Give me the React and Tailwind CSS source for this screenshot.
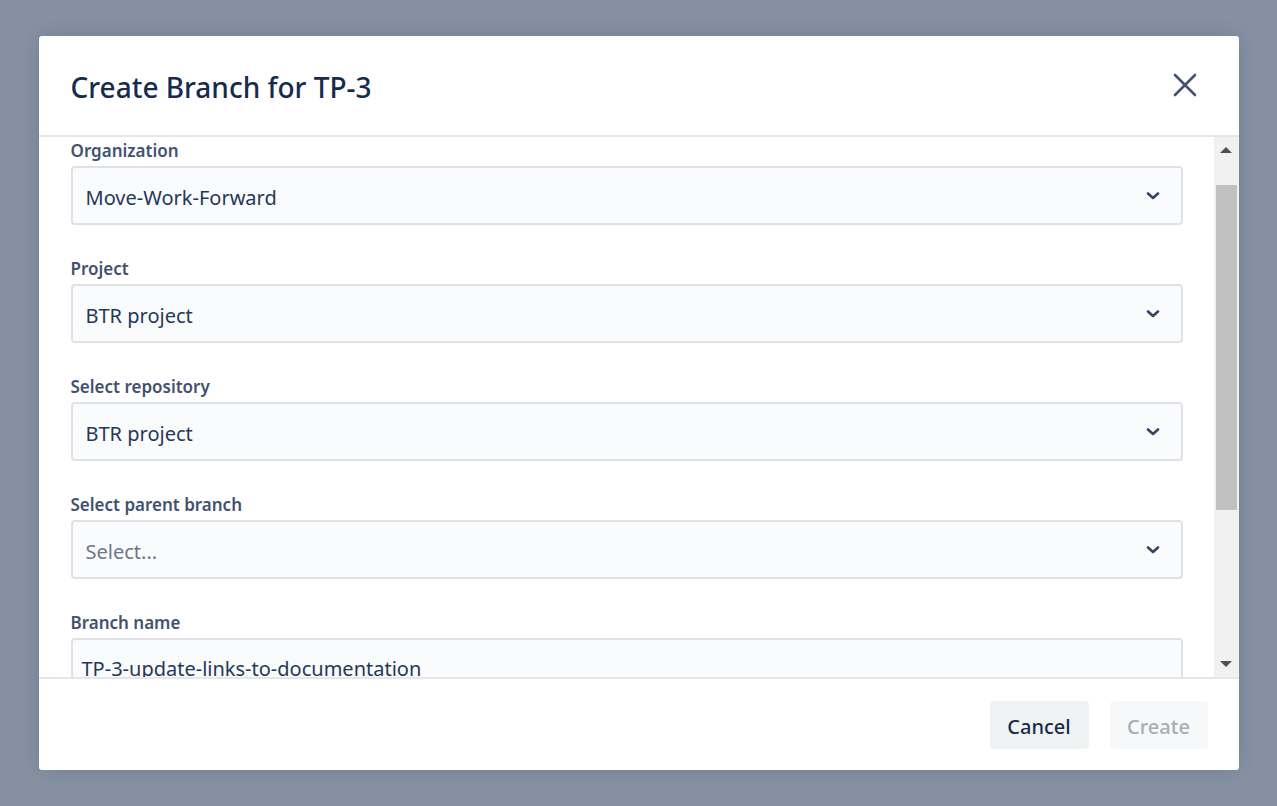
const fields = [
  { label: 'Organization', value: 'Move-Work-Forward', type: 'select' },
  { label: 'Project', value: 'BTR project', type: 'select' },
  { label: 'Select repository', value: 'BTR project', type: 'select' },
  { label: 'Select parent branch', value: '', placeholder: 'Select...', type: 'select' },
  { label: 'Branch name', value: 'TP-3-update-links-to-documentation', type: 'input' },
];

function Chevron() {
  return (
    <svg width="14" height="8" viewBox="0 0 14 8" fill="none">
      <path d="M2 1.5 L7 6 L12 1.5" stroke="#344563" strokeWidth="2.6" strokeLinecap="round" strokeLinejoin="round" />
    </svg>
  );
}

function Field({ field }) {
  return (
    <div className="mb-[30px]">
      <div className="h-[22px] leading-[22px] text-[17px] font-semibold text-[#42526e] pt-[3px] mb-[7px]">{field.label}</div>
      {field.type === 'select' ? (
        <div className="h-[59px] w-[1112px] border-2 border-[#dfe1e6] bg-[#fafbfc] rounded-[4px] flex items-center justify-between pl-[13px] pr-[21px]">
          {field.value ? (
            <span className="text-[20px] text-[#253858] pt-[4px]">{field.value}</span>
          ) : (
            <span className="text-[20px] text-[#6b778c] pt-[4px]">{field.placeholder}</span>
          )}
          <Chevron />
        </div>
      ) : (
        <div className="h-[59px] w-[1112px] border-2 border-[#dfe1e6] bg-[#fafbfc] rounded-[4px] flex items-start pt-[15px] pl-[9px] overflow-hidden">
          <span className="text-[20px] leading-[28px] text-[#253858] whitespace-nowrap">{field.value}</span>
        </div>
      )}
    </div>
  );
}

export default function App() {
  return (
    <div
      className="w-full h-[806px] bg-[#8590a3] flex justify-center pt-[36px]"
      style={{ fontFamily: '"Noto Sans", "Open Sans", sans-serif' }}
    >
      <div className="w-[1200px] h-[734px] bg-white rounded-[3px] flex flex-col overflow-hidden shadow-[0_0_20px_-6px_rgba(9,30,66,0.31)]">
        {/* Header */}
        <div className="h-[101px] shrink-0 flex items-center justify-between pl-[32px] pr-[42px] border-b-2 border-[#e4e6ea]">
          <h2 className="text-[28px] font-medium text-[#172b4d] pt-[2px]">Create Branch for TP-3</h2>
          <svg width="24" height="24" viewBox="0 0 24 24" fill="none" className="-mt-[2px]">
            <path d="M2 2 L22 22 M22 2 L2 22" stroke="#42526e" strokeWidth="2.6" strokeLinecap="round" />
          </svg>
        </div>

        {/* Body */}
        <div className="h-[540px] shrink-0 flex overflow-hidden">
          <div className="flex-1 pl-[32px] overflow-hidden">
            {fields.map((f) => (
              <Field key={f.label} field={f} />
            ))}
          </div>
          <div className="w-[25px] bg-[#f1f1f1] flex flex-col items-center">
            <div className="h-[26px] w-full flex items-center justify-center">
              <div className="w-0 h-0 border-l-[6px] border-r-[6px] border-b-[6px] border-l-transparent border-r-transparent border-b-[#505050]" />
            </div>
            <div className="w-[21px] h-[325px] bg-[#c1c1c1] mt-[22px]" />
            <div className="flex-1" />
            <div className="h-[26px] w-full flex items-center justify-center">
              <div className="w-0 h-0 border-l-[6px] border-r-[6px] border-t-[6px] border-l-transparent border-r-transparent border-t-[#505050]" />
            </div>
          </div>
        </div>

        {/* Footer */}
        <div className="flex-1 border-t-2 border-[#e4e6ea] flex justify-end items-start pt-[22px] pr-[31px] gap-[21px]">
          <button className="w-[99px] h-[48px] rounded-[4px] bg-[#f1f2f4] text-[20px] font-medium text-[#172b4d] pt-[3px]">Cancel</button>
          <button className="w-[98px] h-[48px] rounded-[4px] bg-[#f7f8f9] text-[20px] font-medium text-[#a5adba] pt-[3px]">Create</button>
        </div>
      </div>
    </div>
  );
}
